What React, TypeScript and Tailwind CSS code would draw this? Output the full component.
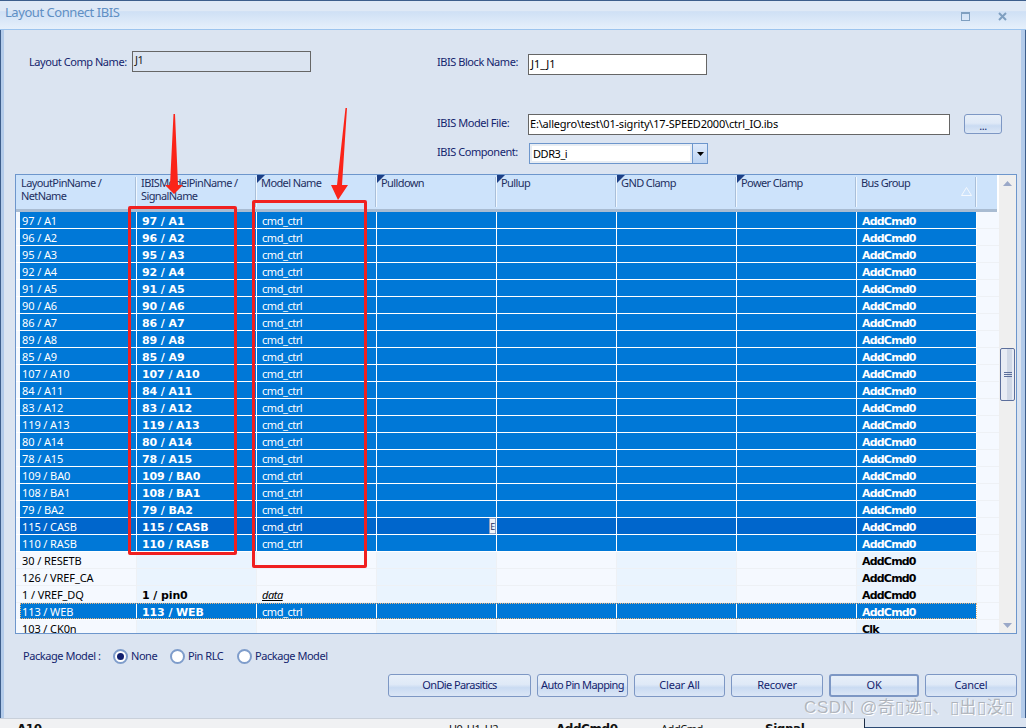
import React from "react";

const pins = [
  "97 / A1", "96 / A2", "95 / A3", "92 / A4", "91 / A5", "90 / A6", "86 / A7", "89 / A8", "85 / A9",
  "107 / A10", "84 / A11", "83 / A12", "119 / A13", "80 / A14", "78 / A15", "109 / BA0", "108 / BA1",
  "79 / BA2", "115 / CASB", "110 / RASB",
];

type Row = { pin: string; model?: string; name?: string; bus: string; sel?: boolean; cur?: boolean; italic?: boolean; focus?: boolean };

const rows: Row[] = [
  ...pins.map((p) => ({ pin: p, model: p, name: "cmd_ctrl", bus: "AddCmd0", sel: true, cur: p === "115 / CASB" })),
  { pin: "30 / RESETB", bus: "AddCmd0" },
  { pin: "126 / VREF_CA", bus: "AddCmd0" },
  { pin: "1 / VREF_DQ", model: "1 / pin0", name: "data", bus: "AddCmd0", italic: true },
  { pin: "113 / WEB", model: "113 / WEB", name: "cmd_ctrl", bus: "AddCmd0", sel: true, focus: true },
  { pin: "103 / CK0n", bus: "Clk" },
];

const boldFont = "font-['DejaVu_Sans'] font-bold text-[11px]";

function Corner() {
  return (
    <svg width="8" height="8" className="absolute left-0 top-0">
      <polygon points="0,0 8,0 0,8" fill="#1c3f86" />
    </svg>
  );
}

function HeaderCell({ lines, mark, first, children }: { lines: string[]; mark?: boolean; first?: boolean; children?: React.ReactNode }) {
  return (
    <div className={"relative h-full pt-[1px] leading-[13px] tracking-[-0.6px] text-[#1d2f5f] " + (first ? "pl-[5px]" : "pl-[4px]")}>
      {mark && <Corner />}
      {lines.map((l) => (
        <div key={l} className="whitespace-nowrap">{l}</div>
      ))}
      <div className="absolute right-0 top-[2px] bottom-[2px] w-[2px] border-l border-[#a9bfd9] bg-white/70" />
      {children}
    </div>
  );
}

function GridRow({ row }: { row: Row }) {
  const cols = [1, 2, 3, 4, 5, 6, 7, 8];
  const base = row.sel ? (row.cur ? "bg-[#0066cc] text-white" : "bg-[#0078d7] text-white") : "text-black";
  const line = row.sel ? "border-white" : "border-[#eef1f5]";
  return (
    <div className="relative grid h-[17px] shrink-0 grid-cols-[121px_repeat(7,120px)_1fr] grid-rows-[17px]">
      {cols.map((c) => {
        const tint = !row.sel ? (c % 2 === 0 ? "bg-[#eaf4fe]" : "bg-[#f5f9ff]") : "";
        return (
          <div key={c} className={"relative h-[17px] overflow-hidden border-b border-r leading-[18px] whitespace-nowrap " + line + " " + base + " " + tint}>
            {c === 1 && (
              <>
                <div className="absolute left-0 top-0 h-[17px] w-[4px] bg-[#f5f9ff]" />
                <span className="block pl-[6px] tracking-[-0.1px]">{row.pin}</span>
              </>
            )}
            {c === 2 && row.model && <span className={"block pl-[5px] leading-[20px] tracking-[-0.1px] " + boldFont}>{row.model}</span>}
            {c === 3 && row.name && (
              <span className={"block pl-[5px] " + (row.italic ? "italic underline" : "")}>{row.name}</span>
            )}
            {c === 4 && row.cur && (
              <div className="absolute right-0 top-0 flex h-[16px] w-[7px] items-center justify-center rounded-[1px] border border-[#8fa3c4] bg-[#eef2f8] text-[9px] leading-none text-[#1d2f5f]">
                E
              </div>
            )}
            {c === 8 && <span className={"block pl-[5px] leading-[20px] tracking-[-0.8px] " + boldFont}>{row.bus}</span>}
          </div>
        );
      })}
      <div className="border-b border-[#eef1f5] bg-[#f5f9ff]" />
      {row.focus && (
        <div className="absolute bottom-[1px] left-[4px] top-0 w-[957px] border border-dotted border-[#eeb47a]" />
      )}
    </div>
  );
}

function Scrollbar() {
  return (
    <div className="flex w-[17px] shrink-0 flex-col items-center bg-[#efefef] pt-[6px] pb-[5px]">
      <svg width="9" height="5"><polygon points="4.5,0 9,5 0,5" fill="#9aa8c8" /></svg>
      <div className="mt-[162px] flex h-[53px] w-[15px] flex-col items-center justify-center gap-[1px] rounded-[2px] border border-[#5c6f9c] bg-[linear-gradient(90deg,#e8ecf4_0%,#e8ecf4_45%,#d0d8e6_45%,#d0d8e6_85%,#e8ecf4_85%)]">
        <div className="h-[1px] w-[8px] bg-[#5c6f9c]" />
        <div className="h-[1px] w-[8px] bg-[#5c6f9c]" />
        <div className="h-[1px] w-[8px] bg-[#5c6f9c]" />
      </div>
      <div className="flex-1" />
      <svg width="9" height="5"><polygon points="0,0 9,0 4.5,5" fill="#9aa8c8" /></svg>
    </div>
  );
}

function Radio({ label, on, w }: { label: string; on?: boolean; w: string }) {
  return (
    <div className={"flex items-center gap-[3px] whitespace-nowrap " + w}>
      <div className="flex h-[15px] w-[15px] shrink-0 items-center justify-center rounded-full border-2 border-[#7f9dcb] bg-white">
        {on && <div className="h-[7px] w-[7px] rounded-full bg-[#12206e]" />}
      </div>
      <span>{label}</span>
    </div>
  );
}

function Btn({ label, w, ok, tight }: { label: string; w: string; ok?: boolean; tight?: boolean }) {
  return (
    <div
      className={
        "flex h-[23px] items-center justify-center whitespace-nowrap rounded-[3px] bg-[linear-gradient(180deg,#e7eff9_0%,#dfe9f7_45%,#cadbf2_60%,#dbe6f6_100%)] " +
        w + " " + (ok ? "border-2 border-[#7d97c4] " : "border border-[#7d97c4] ") + (tight ? "tracking-[-0.6px]" : "tracking-[-0.2px]")
      }
    >
      {label}
    </div>
  );
}

function Arrows() {
  return (
    <svg width="1026" height="728" className="pointer-events-none absolute left-0 top-0">
      <polygon points="173.5,114 175,114 178,185 183,185 174,194 165,185 170,185" fill="#fb2419" />
      <polygon points="345.5,108 347,108 342,185 348,185 338,200 331,185 337,185" fill="#fb2419" />
    </svg>
  );
}

export default function App() {
  return (
    <div className="relative flex h-[728px] w-[1026px] flex-col overflow-hidden bg-[#dbe4f1] font-['Noto_Sans','Liberation_Sans',sans-serif] text-[11px] tracking-[-0.45px] text-[#14246e]">
      {/* title bar */}
      <div className="flex h-[30px] shrink-0 items-start border-t border-[#3d5e8c] border-b border-b-[#9cc4ee] bg-[linear-gradient(180deg,#dfe9f6_0%,#dfe9f6_35%,#cfe0f5_38%,#e6f0fb_100%)] pl-[5px] pt-[2px]">
        <span className="text-[13px] leading-[18px] text-[#5f8fc4]">Layout Connect IBIS</span>
        <div className="flex-1" />
        <div className="mt-[9px] h-[9px] w-[9px] border border-t-2 border-[#7f9fc0]" />
        <svg width="9" height="9" viewBox="0 0 9 9" className="ml-[28px] mr-[19px] mt-[9px]">
          <path d="M1 1L8 8M8 1L1 8" stroke="#7f9fc0" strokeWidth="2" />
        </svg>
      </div>

      <div className="flex min-h-0 flex-1">
        <div className="w-[4px] shrink-0 border-l border-[#3d5e8c] bg-[#b3cbea]" />
        <div className="ml-[11px] mr-[4px] flex min-w-0 flex-1 flex-col">
          {/* form rows */}
          <div className="mt-[21px] flex h-[24px]">
            <div className="flex w-[422px] items-start">
              <span className="ml-[14px] mt-[3px] w-[103px] whitespace-nowrap leading-[15px]">Layout Comp Name:</span>
              <div className="h-[21px] w-[179px] border border-[#666] pl-[2px] leading-[15px] text-[#222]">J1</div>
            </div>
            <span className="mt-[3px] w-[91px] whitespace-nowrap leading-[15px]">IBIS Block Name:</span>
            <div className="mt-[3px] h-[21px] w-[179px] border border-[#666] bg-white pl-[2px] leading-[17px] tracking-normal text-black">J1_J1</div>
          </div>
          <div className="mt-[39px] flex h-[21px] pl-[422px]">
            <span className="mt-[1px] w-[91px] whitespace-nowrap leading-[15px]">IBIS Model File:</span>
            <div className="h-[21px] w-[422px] border border-[#666] bg-white pl-[1px] leading-[17px] tracking-[-0.2px] text-black">E:\allegro\test\01-sigrity\17-SPEED2000\ctrl_IO.ibs</div>
            <div className="ml-[14px] flex h-[20px] w-[38px] items-center justify-center rounded-[3px] border border-[#7d97c4] bg-[linear-gradient(180deg,#e7eff9_0%,#dfe9f7_45%,#cadbf2_60%,#dbe6f6_100%)] pt-[2px] leading-none">...</div>
          </div>
          <div className="mt-[8px] flex h-[21px] pl-[422px]">
            <span className="mt-[1px] w-[92px] whitespace-nowrap leading-[15px]">IBIS Component:</span>
            <div className="flex h-[21px] w-[179px] border border-[#6d96cc] bg-white">
              <div className="flex-1 border-[2px] border-[#e8edf3] pl-[1px] leading-[16px] text-black">DDR3_i</div>
              <div className="flex w-[15px] items-center justify-center border-l border-[#6d96cc] bg-[linear-gradient(180deg,#dfeafa,#bcd4f3)]">
                <svg width="7" height="4"><polygon points="0,0 7,0 3.5,4" fill="#000" /></svg>
              </div>
            </div>
          </div>

          {/* grid */}
          <div className="mt-[10px] flex h-[460px] shrink-0 border border-[#6d96cc] bg-white">
            <div className="flex min-w-0 flex-1 flex-col overflow-hidden">
              <div className="h-[37px] w-[981px] shrink-0 border-b-[3px] border-[#a9bcd2] bg-[#cde3fb]">
                <div className="grid h-[34px] grid-cols-[121px_repeat(7,120px)_21px]">
                  <HeaderCell lines={["LayoutPinName /", "NetName"]} first />
                  <HeaderCell lines={["IBISModelPinName /", "SignalName"]} />
                  <HeaderCell lines={["Model Name"]} mark />
                  <HeaderCell lines={["Pulldown"]} mark />
                  <HeaderCell lines={["Pullup"]} mark />
                  <HeaderCell lines={["GND Clamp"]} mark />
                  <HeaderCell lines={["Power Clamp"]} mark />
                  <HeaderCell lines={["Bus Group"]}>
                    <svg width="11" height="9" className="absolute right-[5px] top-[12px]">
                      <polygon points="5.5,0.5 10.5,8.5 0.5,8.5" fill="none" stroke="#f4f8fd" />
                    </svg>
                  </HeaderCell>
                  <div />
                </div>
              </div>
              {rows.map((r) => (
                <GridRow key={r.pin} row={r} />
              ))}
            </div>
            <Scrollbar />
          </div>

          {/* package model */}
          <div className="mt-[13px] flex h-[18px] items-center pl-[8px]">
            <span className="w-[90px] whitespace-nowrap">Package Model :</span>
            <Radio label="None" on w="w-[57px]" />
            <Radio label="Pin RLC" w="w-[67px]" />
            <Radio label="Package Model" w="w-[100px]" />
          </div>

          {/* buttons */}
          <div className="mt-[9px] flex justify-end gap-[6px]">
            <Btn label="OnDie Parasitics" w="w-[143px]" tight />
            <Btn label="Auto Pin Mapping" w="w-[91px]" tight />
            <Btn label="Clear All" w="w-[91px]" />
            <Btn label="Recover" w="w-[92px]" />
            <Btn label="OK" w="w-[90px]" ok />
            <Btn label="Cancel" w="w-[92px]" />
          </div>
        </div>
        <div className="w-[5px] shrink-0 border-r border-[#3d5e8c] bg-[#b3cbea]" />
      </div>

      {/* window behind, only its top edge is visible */}
      <div className="flex h-[10px] shrink-0">
        <div className="flex h-full w-[865px] overflow-hidden border-t border-r border-[#c9d0da] border-r-[#1c2c44] bg-[#f0f1f3] pt-[3px] text-[#111]">
          <span className={"ml-[17px] w-[430px] " + boldFont + " text-[12px] leading-[14px]"}>A10</span>
          <span className="ml-[2px] w-[107px] leading-[14px]">U0_U1_U2</span>
          <span className={"w-[105px] text-[12px] leading-[14px] " + boldFont}>AddCmd0</span>
          <span className="w-[104px] leading-[14px]">AddCmd</span>
          <span className={"text-[12px] leading-[14px] " + boldFont}>Signal</span>
        </div>
        <div className="flex-1 border-b border-[#2c4a74]" />
      </div>

      {/* annotations drawn on top of the screenshot */}
      <div className="pointer-events-none absolute left-[128px] top-[206px] h-[349px] w-[109px] rounded-[2px] border-[3px] border-[#f02020]" />
      <div className="pointer-events-none absolute left-[252px] top-[200px] h-[368px] w-[115px] rounded-[2px] border-[3px] border-[#f02020]" />
      <Arrows />
      <div className="pointer-events-none absolute left-[804px] top-[697px] whitespace-nowrap font-['Liberation_Sans','Noto_Sans_CJK_SC',sans-serif] text-[17px] leading-[22px] tracking-[0.6px] text-[#9a9ea5]/70 [text-shadow:1px_1px_0_#ffffff]">
        CSDN @奇▯迹▯、▯出▯没▯
      </div>
    </div>
  );
}
